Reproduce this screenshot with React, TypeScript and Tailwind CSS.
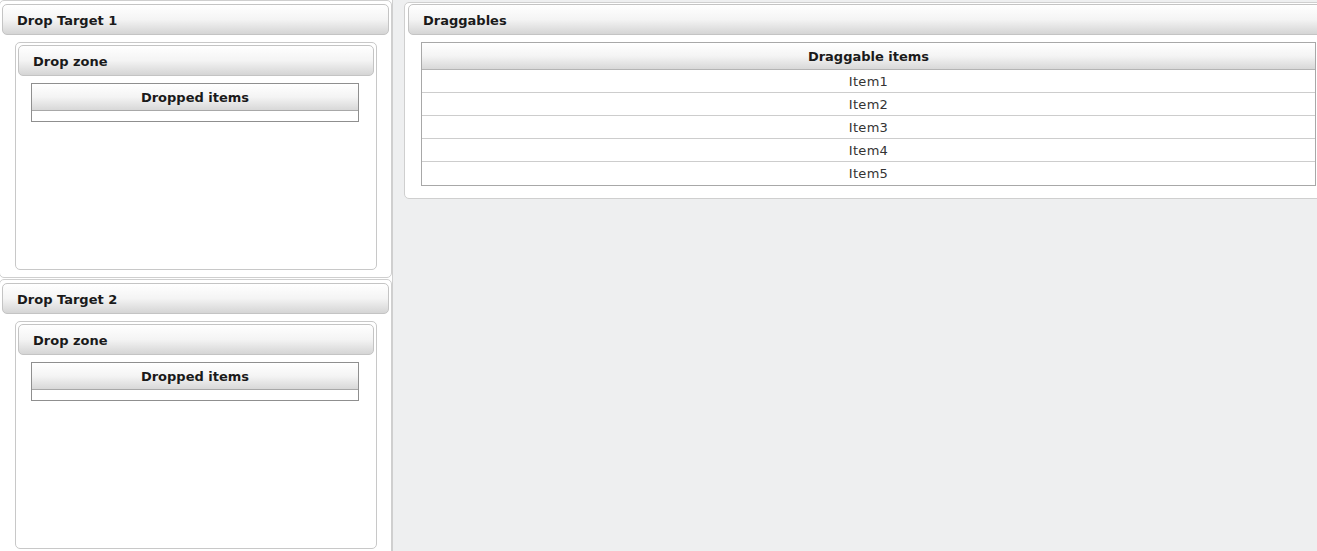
const font = { fontFamily: '"DejaVu Sans", Verdana, sans-serif' }

function Header({ title, className = '' }: { title: string; className?: string }) {
  return (
    <div
      className={`h-[31px] flex items-center pt-[2px] rounded-[5px] border border-[#c4c4c4] bg-gradient-to-b from-white via-[#f4f4f4] to-[#d5d5d5] text-[13px] font-bold text-[#1a1a1a] ${className}`}
    >
      {title}
    </div>
  )
}

function DropTarget({ title }: { title: string }) {
  return (
    <div className="h-[278px] shrink-0 border border-[#cfcfcf] rounded-[5px] -ml-px bg-white pt-[3px] pl-[2px] pr-[2px]">
      <Header title={title} className="pl-[14px]" />
      <div className="mt-[7px] ml-[13px] mr-[12px] h-[228px] border border-[#c8c8c8] rounded-[5px] p-[2px]">
        <Header title="Drop zone" className="pl-[14px]" />
        <div className="mt-[7px] ml-[13px] mr-[15px] border border-[#8f8f8f]">
          <div className="h-[27px] flex items-center justify-center pt-[2px] bg-gradient-to-b from-white via-[#f4f4f4] to-[#d8d8d8] border-b border-[#a8a8a8] text-[13px] font-bold text-[#1a1a1a]">
            Dropped items
          </div>
          <div className="h-[10px] bg-white" />
        </div>
      </div>
    </div>
  )
}

export default function App() {
  const items = ['Item1', 'Item2', 'Item3', 'Item4', 'Item5']
  return (
    <div className="flex h-[551px] w-[1317px] overflow-hidden bg-[#eeeff0]" style={font}>
      <div className="w-[393px] shrink-0 bg-white border-r border-[#cfcfcf] flex flex-col gap-[1px]">
        <DropTarget title="Drop Target 1" />
        <DropTarget title="Drop Target 2" />
      </div>
      <div className="flex-1 pl-[11px] pt-[2px] min-w-0">
        <div className="w-[940px] h-[197px] border border-[#cfcfcf] rounded-[5px] bg-white pt-[1px] pl-[3px]">
          <Header title="Draggables" className="pl-[14px]" />
          <div className="mt-[7px] ml-[13px] w-[895px] border border-[#a8a8a8]">
            <div className="h-[27px] flex items-center justify-center pt-[2px] bg-gradient-to-b from-white via-[#f4f4f4] to-[#d8d8d8] border-b border-[#b4b4b4] text-[13px] font-bold text-[#1a1a1a]">
              Draggable items
            </div>
            {items.map((item, i) => (
              <div
                key={item}
                className={`h-[23px] flex items-center justify-center pt-[1px] bg-white text-[13px] tracking-[0.3px] text-[#333] ${i < items.length - 1 ? 'border-b border-[#cdcdcd]' : ''}`}
              >
                {item}
              </div>
            ))}
          </div>
        </div>
      </div>
    </div>
  )
}
